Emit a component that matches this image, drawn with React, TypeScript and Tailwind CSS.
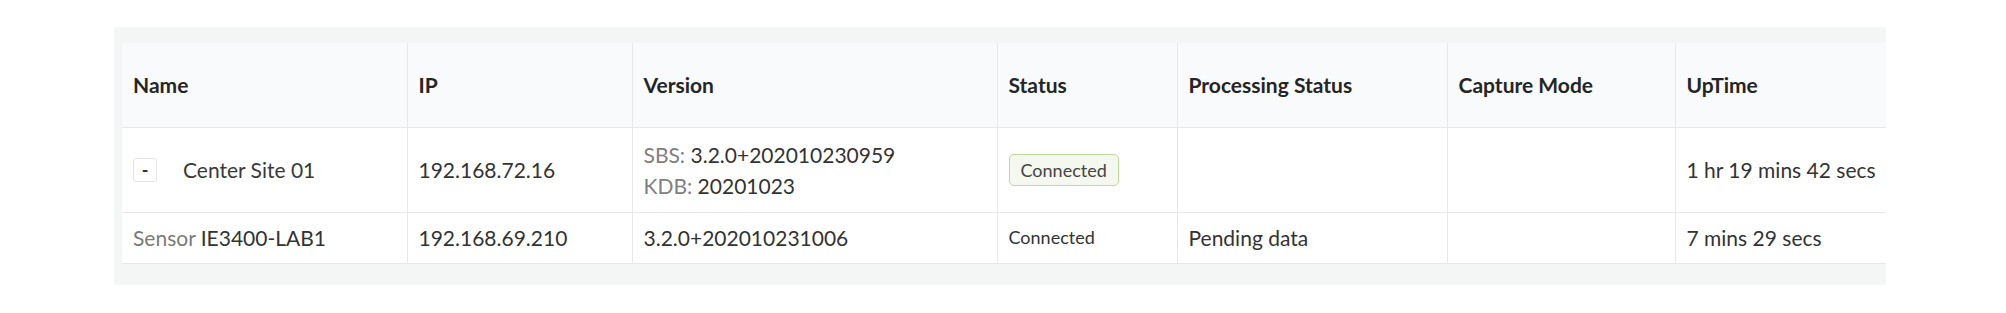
const headers = ['Name', 'IP', 'Version', 'Status', 'Processing Status', 'Capture Mode', 'UpTime']
const widths = ['w-[285px]', 'w-[225px]', 'w-[365px]', 'w-[180px]', 'w-[270px]', 'w-[228px]', 'w-[250px]']

const cell = 'border-r border-[#e6e8ea] px-[11px] align-middle last:border-r-0'

export default function App() {
    return (
        <div className="min-h-screen bg-white pl-[114px] pt-[27px] font-['Lato',sans-serif] text-[21px] text-[#333]">
            <div className="w-[1772px] overflow-hidden bg-[#f4f5f5] pl-[8px] pt-[16px] pb-[21px]">
                <table className="w-[1803px] table-fixed border-collapse bg-white">
                    <colgroup>
                        {widths.map((w, i) => (
                            <col key={i} className={w} />
                        ))}
                    </colgroup>
                    <thead>
                        <tr className="h-[84px] border-b border-[#e6e8ea] bg-[#f9fafc]">
                            {headers.map((h) => (
                                <th key={h} className={`${cell} text-left font-bold text-[#252525]`}>
                                    {h}
                                </th>
                            ))}
                        </tr>
                    </thead>
                    <tbody>
                        <tr className="h-[85px] border-b border-[#e6e8ea]">
                            <td className={cell}>
                                <div className="flex items-center">
                                    <span className="flex h-[24px] w-[24px] items-center justify-center rounded-[3px] border border-[#e3e5e7] text-[18px] font-bold leading-none text-[#333]">
                                        -
                                    </span>
                                    <span className="ml-[26px] text-[#3a3a3a]">Center Site 01</span>
                                </div>
                            </td>
                            <td className={cell}>192.168.72.16</td>
                            <td className={`${cell} leading-[31px]`}>
                                <div>
                                    <span className="text-[#808080]">SBS: </span>3.2.0+202010230959
                                </div>
                                <div>
                                    <span className="text-[#808080]">KDB: </span>20201023
                                </div>
                            </td>
                            <td className={cell}>
                                <span className="inline-flex h-[32px] items-center rounded-[5px] border border-[#bddb9c] bg-[#f4f8ee] px-[11px] text-[18px] text-[#444]">
                                    Connected
                                </span>
                            </td>
                            <td className={cell}></td>
                            <td className={cell}></td>
                            <td className={cell}>1 hr 19 mins 42 secs</td>
                        </tr>
                        <tr className="h-[51px] border-b border-[#e6e8ea]">
                            <td className={cell}>
                                <span className="text-[#7a7a7a]">Sensor </span>IE3400-LAB1
                            </td>
                            <td className={cell}>192.168.69.210</td>
                            <td className={cell}>3.2.0+202010231006</td>
                            <td className={`${cell} text-[18px]`}>Connected</td>
                            <td className={cell}>Pending data</td>
                            <td className={cell}></td>
                            <td className={cell}>7 mins 29 secs</td>
                        </tr>
                    </tbody>
                </table>
            </div>
        </div>
    )
}
